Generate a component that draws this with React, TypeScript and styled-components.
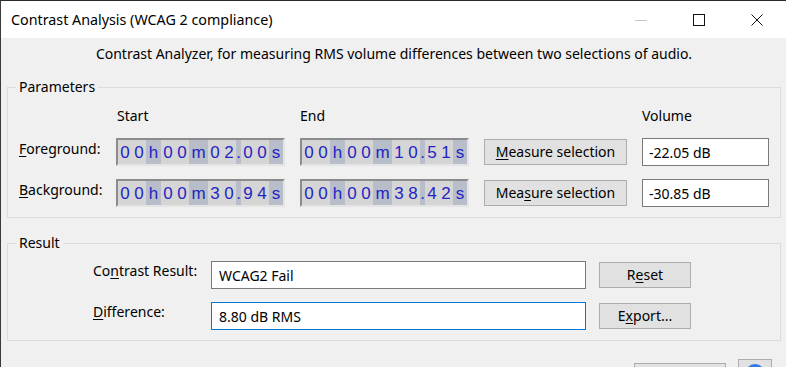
import styled, { createGlobalStyle } from 'styled-components'

const GlobalStyle = createGlobalStyle`
  * { box-sizing: border-box; }
  html, body {
    margin: 0;
    padding: 0;
    height: 367px;
    overflow: hidden;
    background: #f0f0f0;
  }
  body {
    font-family: 'Noto Sans', 'Liberation Sans', sans-serif;
    font-size: 14px;
    color: #000;
  }
`

const Window = styled.div`
  width: 786px;
  height: 367px;
  overflow: hidden;
  display: flex;
  flex-direction: column;
  border-top: 1px solid #2b2b2b;
  border-left: 1px solid #3a3a3a;
  background: #f0f0f0;
`

const TitleBar = styled.div`
  flex: none;
  height: 37px;
  display: flex;
  background: #fff;
`

const Title = styled.div`
  flex: 1;
  padding-left: 10px;
  font-size: 14.3px;
  line-height: 37px;
`

const CaptionButton = styled.div`
  width: 58px;
  display: flex;
  align-items: center;
  justify-content: center;
`

const Body = styled.div`
  flex: 1;
  display: flex;
  flex-direction: column;
  padding: 7px 5px 0 6px;
`

const Intro = styled.p`
  margin: 0;
  text-align: center;
  line-height: 18px;
`

const GroupBox = styled.fieldset<{ $top: number }>`
  margin: ${p => p.$top}px 0 0;
  padding: 0;
  min-width: 0;
  border: 1px solid #dcdcdc;
`

const Legend = styled.legend`
  margin-left: 8px;
  padding: 0 3px;
  line-height: 18px;
`

const ParamGrid = styled.div`
  display: grid;
  grid-template-columns: 82px 169px 169px 143px 127px;
  grid-template-rows: 18px 28px 28px;
  column-gap: 15px;
  row-gap: 13px;
  padding: 11px 11px 10px 11px;
  align-items: center;
`

const ResultGrid = styled.div`
  display: grid;
  grid-template-columns: 105px 375px 92px;
  grid-template-rows: 28px 28px;
  column-gap: 13px;
  row-gap: 13px;
  padding: 9px 0 10px 85px;
  align-items: center;
`

const ColHead = styled.div<{ $col: number; $shift?: number }>`
  grid-column: ${p => p.$col};
  padding-left: ${p => p.$shift ?? 0}px;
  line-height: 18px;
`

const FieldLabel = styled.label<{ $pad: number }>`
  align-self: start;
  padding-top: ${p => p.$pad}px;
  line-height: 18px;
  white-space: nowrap;
`

const Key = styled.span`
  text-decoration: underline;
  text-underline-offset: 2px;
`

const TimeBox = styled.div`
  display: flex;
  height: 28px;
  border-style: solid;
  border-width: 2px;
  border-color: #8c8c8c #e4e4e4 #e4e4e4 #8c8c8c;
  background: #b7bec9;
  font-family: 'Liberation Sans', Arial, sans-serif;
  font-size: 17px;
  color: #2424c4;
`

const TimeCell = styled.span<{ $unit: boolean; $w: number }>`
  width: ${p => p.$w}px;
  background: ${p => (p.$unit ? 'transparent' : '#d5d5d5')};
  text-align: center;
  line-height: 25px;
`

const PushButton = styled.button<{ $w?: number; $top?: number }>`
  width: ${p => (p.$w ? `${p.$w}px` : '100%')};
  height: 26px;
  margin-top: ${p => p.$top ?? 0}px;
  padding: 0;
  background: #e1e1e1;
  border: 1px solid #adadad;
  font: inherit;
  color: #000;
  line-height: 18px;
`

const TextBox = styled.input<{ $focused?: boolean; $pad: number }>`
  width: 100%;
  height: 28px;
  padding: 0 ${p => p.$pad}px;
  background: #fff;
  border: 1px solid ${p => (p.$focused ? '#0078d7' : '#7a7a7a')};
  outline: none;
  font: inherit;
  color: #000;
`

const Footer = styled.div`
  display: flex;
  justify-content: flex-end;
  align-items: flex-start;
  gap: 12px;
  margin-top: 18px;
  padding-right: 9px;
`

const HelpButton = styled.button`
  width: 34px;
  height: 30px;
  padding: 3px 0 0;
  display: flex;
  justify-content: center;
  align-items: flex-start;
  background: #e1e1e1;
  border: 1px solid #adadad;
`

const unitWidths: Record<string, number> = { h: 15, m: 19, '.': 5, s: 14 }

function TimeField({ value }: { value: string }) {
  return (
    <TimeBox>
      {value.split('').map((ch, i) => {
        const unit = !/[0-9]/.test(ch)
        return (
          <TimeCell key={i} $unit={unit} $w={unit ? unitWidths[ch] : 14}>
            {ch}
          </TimeCell>
        )
      })}
    </TimeBox>
  )
}

const rows = [
  { key: 'F', post: 'oreground:', start: '00h00m02.00s', end: '00h00m10.51s', btn: ['', 'M', 'easure selection'], vol: '-22.05 dB' },
  { key: 'B', post: 'ackground:', start: '00h00m30.94s', end: '00h00m38.42s', btn: ['Mea', 's', 'ure selection'], vol: '-30.85 dB' },
]

export default function App() {
  return (
    <>
      <GlobalStyle />
      <Window>
        <TitleBar>
          <Title>Contrast Analysis (WCAG 2 compliance)</Title>
          <CaptionButton>
            <svg width="12" height="12" viewBox="0 0 12 12">
              <path d="M0 6.5h12" stroke="#c6c6c6" strokeWidth="1" />
            </svg>
          </CaptionButton>
          <CaptionButton>
            <svg width="12" height="12" viewBox="0 0 12 12">
              <rect x="0.5" y="0.5" width="11" height="11" fill="none" stroke="#111" strokeWidth="1" />
            </svg>
          </CaptionButton>
          <CaptionButton>
            <svg width="12" height="12" viewBox="0 0 12 12">
              <path d="M0.5 0.5l11 11M11.5 0.5l-11 11" stroke="#111" strokeWidth="1" />
            </svg>
          </CaptionButton>
        </TitleBar>

        <Body>
          <Intro>Contrast Analyzer, for measuring RMS volume differences between two selections of audio.</Intro>

          <GroupBox $top={15}>
            <Legend>Parameters</Legend>
            <ParamGrid>
              <ColHead $col={2} $shift={1}>Start</ColHead>
              <ColHead $col={3}>End</ColHead>
              <ColHead $col={5}>Volume</ColHead>
              {rows.map(r => (
                <>
                  <FieldLabel $pad={2}>
                    <Key>{r.key}</Key>
                    {r.post}
                  </FieldLabel>
                  <TimeField value={r.start} />
                  <TimeField value={r.end} />
                  <PushButton>
                    {r.btn[0]}
                    <Key>{r.btn[1]}</Key>
                    {r.btn[2]}
                  </PushButton>
                  <TextBox $pad={6} readOnly value={r.vol} />
                </>
              ))}
            </ParamGrid>
          </GroupBox>

          <GroupBox $top={16}>
            <Legend>Result</Legend>
            <ResultGrid>
              <FieldLabel $pad={1}>
                Co<Key>n</Key>trast Result:
              </FieldLabel>
              <TextBox $pad={7} readOnly value="WCAG2 Fail" />
              <PushButton>
                R<Key>e</Key>set
              </PushButton>
              <FieldLabel $pad={1}>
                <Key>D</Key>ifference:
              </FieldLabel>
              <TextBox $pad={7} $focused readOnly value="8.80 dB RMS" />
              <PushButton>
                E<Key>x</Key>port...
              </PushButton>
            </ResultGrid>
          </GroupBox>

          <Footer>
            <PushButton $w={92} $top={4} aria-label="Close" />
            <HelpButton aria-label="Help">
              <svg width="22" height="22" viewBox="0 0 22 22">
                <circle cx="11" cy="11" r="10" fill="#2f7be6" />
              </svg>
            </HelpButton>
          </Footer>
        </Body>
      </Window>
    </>
  )
}
